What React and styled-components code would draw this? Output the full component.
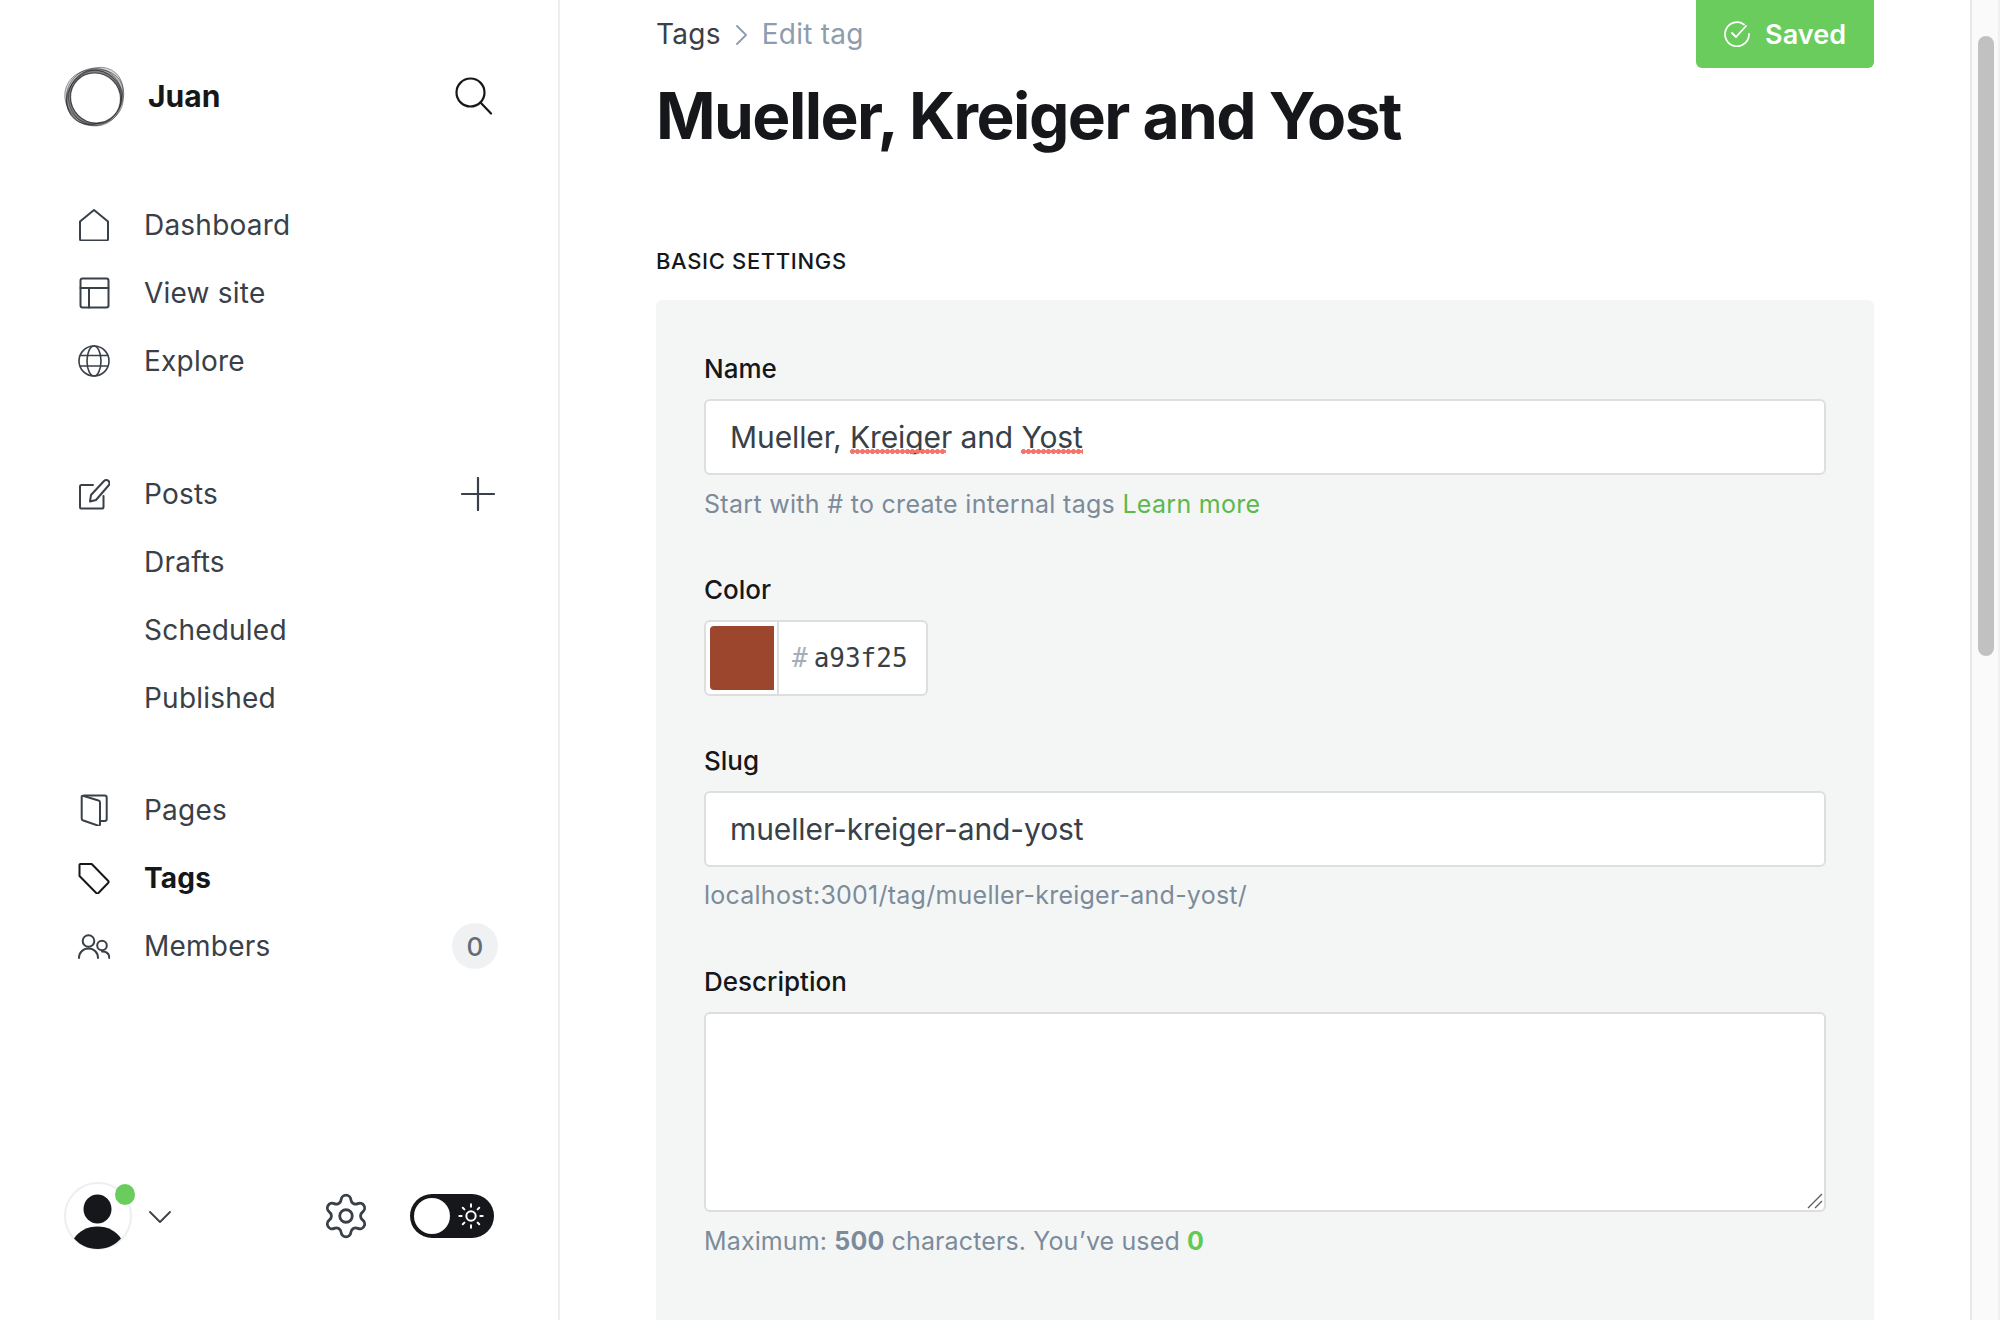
import React from 'react'
import styled, { createGlobalStyle } from 'styled-components'
import { Settings, Sun } from 'lucide-react'

const GlobalStyle = createGlobalStyle`
  html, body {
    margin: 0;
    height: 100%;
    overflow: hidden;
    background: #fff;
    font-family: Inter, "Noto Sans", sans-serif;
  }
  * { box-sizing: border-box; }
`

const Page = styled.div`
  display: flex;
  width: 2000px;
  height: 1320px;
  overflow: hidden;
`

const Sidebar = styled.aside`
  width: 560px;
  flex: none;
  display: flex;
  flex-direction: column;
  padding: 65px 60px 71px 64px;
  border-right: 2px solid #ebedef;
`

const Brand = styled.div`
  display: flex;
  align-items: center;
  height: 62px;
`

const BrandName = styled.span`
  margin-left: 22px;
  flex: 1;
  font-size: 30px;
  font-weight: 700;
  color: #15171a;
`

const SearchSlot = styled.span`
  display: flex;
  margin-right: 5px;
`

const Nav = styled.nav`
  padding-left: 14px;
  margin-top: ${p => p.$top}px;
`

const NavRow = styled.div`
  display: flex;
  align-items: center;
  height: 68px;
  font-size: 28px;
  letter-spacing: 0.22px;
  color: ${p => (p.$active ? '#15171a' : '#394047')};
  font-weight: ${p => (p.$active ? 700 : 400)};
`

const NavIcon = styled.span`
  display: flex;
  width: 32px;
  height: 32px;
  margin-right: 34px;
  color: ${p => (p.$active ? '#15171a' : '#394047')};
`

const SubRow = styled(NavRow)`
  padding-left: 66px;
`

const Label = styled.span`
  flex: 1;
`

const PlusSlot = styled.span`
  display: flex;
  margin-right: 3px;
`

const Count = styled.span`
  display: flex;
  align-items: center;
  justify-content: center;
  width: 46px;
  height: 46px;
  border-radius: 50%;
  background: #eff1f3;
  color: #626d79;
  font-size: 26px;
  font-weight: 500;
  letter-spacing: 0;
`

const Footer = styled.div`
  margin-top: auto;
  display: flex;
  align-items: center;
  height: 67px;
`

const Avatar = styled.div`
  position: relative;
  width: 68px;
  height: 68px;
`

const OnlineDot = styled.span`
  position: absolute;
  top: 2px;
  right: -3px;
  width: 20px;
  height: 21px;
  border-radius: 50%;
  background: #6acc5c;
`

const Chevron = styled.svg`
  margin-left: 17px;
  margin-top: 2px;
  color: #394047;
`

const GearSlot = styled.span`
  display: flex;
  margin-left: auto;
  margin-right: 39px;
  color: #394047;
`

const Toggle = styled.div`
  display: flex;
  align-items: center;
  justify-content: space-between;
  width: 84px;
  height: 44px;
  margin-right: 4px;
  padding: 0 9px 0 4px;
  border-radius: 22px;
  background: #15171a;
  color: #fff;
`

const Knob = styled.span`
  width: 36px;
  height: 36px;
  border-radius: 50%;
  background: #fff;
`

const Main = styled.main`
  flex: 1;
  min-width: 0;
  padding: 0 96px;
`

const Head = styled.header`
  display: flex;
  justify-content: space-between;
  align-items: flex-start;
`

const Crumbs = styled.div`
  display: flex;
  align-items: center;
  height: 68px;
  font-size: 28px;
  letter-spacing: 0.25px;
  color: #394047;
`

const CrumbSep = styled.svg`
  margin: 2px 15px 0 15px;
  color: #8e9cac;
`

const CrumbNow = styled.span`
  color: #8e9cac;
`

const SaveButton = styled.div`
  display: flex;
  align-items: center;
  width: 178px;
  height: 68px;
  padding-left: 28px;
  gap: 15px;
  border-radius: 0 0 6px 6px;
  background: #6acc5c;
  color: #fff;
  font-size: 27px;
  font-weight: 600;
  letter-spacing: 0.1px;
`

const Title = styled.h1`
  margin: 9px 0 0;
  font-size: 64px;
  line-height: 78px;
  font-weight: 700;
  letter-spacing: -1.55px;
  color: #15171a;
`

const SectionTitle = styled.h4`
  margin: 88px 0 0;
  height: 57px;
  line-height: 36px;
  font-size: 22px;
  font-weight: 500;
  letter-spacing: 0.65px;
  text-transform: uppercase;
  color: #15171a;
`

const Panel = styled.section`
  height: 1100px;
  padding: 51px 48px;
  border-radius: 6px 6px 0 0;
  background: #f4f6f6;
`

const Field = styled.div`
  margin-bottom: ${p => p.$gap}px;
`

const FieldLabel = styled.label`
  display: block;
  line-height: 36px;
  margin-bottom: 12px;
  font-size: 26px;
  font-weight: 500;
  color: #15171a;
`

const InputBox = styled.div`
  display: flex;
  align-items: center;
  height: 76px;
  padding: 0 24px;
  border: 2px solid #dddedf;
  border-radius: 6px;
  background: #fff;
  font-size: 30px;
  letter-spacing: -0.1px;
  color: #394047;
`

const Misspelled = styled.span`
  position: relative;
  &::after {
    content: '';
    position: absolute;
    left: 0;
    right: ${p => p.$cut || 0}px;
    bottom: 1px;
    height: 5px;
    background: radial-gradient(circle at 2.5px 2.5px, #f4756b 2.2px, transparent 2.7px) 0 0 / 5px 5px repeat-x;
  }
`

const Hint = styled.p`
  margin: ${p => p.$top}px 0 0;
  line-height: 36px;
  font-size: 25px;
  letter-spacing: ${p => p.$spacing}px;
  color: #7c8b9a;
`

const HintLink = styled.span`
  color: #5cb94c;
`

const HintCount = styled.strong`
  font-weight: 700;
  color: ${p => (p.$green ? '#62c954' : 'inherit')};
`

const ColorBox = styled.div`
  display: flex;
  width: 224px;
  height: 76px;
  border: 2px solid #dddedf;
  border-radius: 6px;
  background: #fff;
`

const SwatchCell = styled.div`
  width: 73px;
  flex: none;
  padding: 4px;
  border-right: 2px solid #dddedf;
`

const Swatch = styled.div`
  width: 64px;
  height: 64px;
  border-radius: 4px 0 0 4px;
  background: #9b462d;
`

const HexValue = styled.div`
  display: flex;
  align-items: center;
  padding-left: 13px;
  gap: 6px;
  font-family: "DejaVu Sans Mono", monospace;
  font-size: 26px;
  color: #394047;
`

const HexHash = styled.span`
  color: #a5aeb8;
`

const TextAreaWrap = styled.div`
  position: relative;
`

const TextArea = styled.textarea`
  display: block;
  width: 100%;
  height: 200px;
  padding: 12px 24px;
  border: 2px solid #dddedf;
  border-radius: 6px;
  background: #fff;
  resize: none;
  outline: none;
`

const ResizeGrip = styled.svg`
  position: absolute;
  right: 3px;
  bottom: 3px;
`

const ScrollTrack = styled.div`
  position: relative;
  width: 30px;
  flex: none;
  border-left: 2px solid #e8e8e8;
  border-right: 2px solid #f0f0f0;
  background: #fafafa;
`

const ScrollThumb = styled.div`
  position: absolute;
  top: 36px;
  left: 6px;
  width: 16px;
  height: 620px;
  border-radius: 8px;
  background: #c1c1c1;
`

const Line = ({ children, ...rest }) => (
  <svg width="32" height="32" viewBox="0 0 32 32" fill="none" stroke="currentColor" strokeWidth="2" strokeLinejoin="round" strokeLinecap="round" {...rest}>
    {children}
  </svg>
)

const HomeIcon = () => <Line><path d="M2 12.500 16 1l14 11.500V30a1.500 1.500 0 0 1-1.500 1.500h-25A1.500 1.500 0 0 1 2 30z" /></Line>
const LayoutIcon = () => (
  <Line>
    <rect x="2.500" y="1.500" width="28" height="29" rx="2" />
    <path d="M2.500 11h28M11 11v19.500" />
  </Line>
)
const GlobeIcon = () => (
  <Line strokeWidth="1.6">
    <circle cx="16" cy="16" r="15" />
    <ellipse cx="16" cy="16" rx="7" ry="15" />
    <path d="M2.500 10.500h27M2.500 21h27" />
  </Line>
)
const PostsIcon = () => (
  <Line>
    <path d="M15 7H3.500a1.500 1.500 0 0 0-1.500 1.500V29a1.500 1.500 0 0 0 1.500 1.500H24a1.500 1.500 0 0 0 1.500-1.500V18" />
    <path d="M12 23.500l1-6.500L26 3a3 3 0 0 1 4.500 4.500L18 22z" />
  </Line>
)
const PagesIcon = () => (
  <Line>
    <path d="M6 1.500h20.700a2 2 0 0 1 2 2V25a2 2 0 0 1-2 2H22.500" />
    <path d="M5 1.800l15.500 4.700A2 2 0 0 1 22 8.500v22a1.300 1.300 0 0 1-1.700 1.200L5.300 26.500a2.200 2.200 0 0 1-1.600-2.100V3a1 1 0 0 1 1.300-1.200z" />
  </Line>
)
const TagIcon = () => (
  <Line>
    <path d="M2.500 2H13.700L30.300 19a1.200 1.200 0 0 1 0 1.700L20.200 31.200a1.200 1.200 0 0 1-1.700 0L1.500 14V3a1 1 0 0 1 1-1z" />
  </Line>
)
const MembersIcon = () => (
  <Line>
    <circle cx="10.500" cy="11" r="5.800" />
    <path d="M1 28c0-5.500 4-9.500 9.500-9.500S20 22.500 20 28" />
    <circle cx="24" cy="15.500" r="4.800" />
    <path d="M24 21.500c4.500 0 7.300 2.500 7.300 6.500" />
  </Line>
)

const Logo = () => (
  <svg width="62" height="62" viewBox="0 0 62 62" fill="#15171a" fillOpacity="0.14" stroke="#15171a" strokeWidth="0.8" strokeOpacity="0.5">
    <ellipse cx="31" cy="31" rx="31" ry="25.500" transform="rotate(-48 31 31)" />
    <ellipse cx="31" cy="32" rx="30" ry="26" transform="rotate(-35 31 32)" />
    <ellipse cx="30" cy="32" rx="29.500" ry="27" transform="rotate(20 30 32)" />
    <ellipse cx="30" cy="32" rx="29" ry="27.500" transform="rotate(-70 30 32)" />
    <ellipse cx="31" cy="33" rx="28" ry="26.500" transform="rotate(75 31 33)" />
    <ellipse cx="31.500" cy="33" rx="25.500" ry="24.500" transform="rotate(45 31.500 33)" fill="#fff" fillOpacity="1" strokeWidth="1.200" strokeOpacity="0.7" />
  </svg>
)

const SearchIcon = () => (
  <svg width="38" height="38" viewBox="0 0 38 38" fill="none" stroke="#15171a" strokeWidth="2.200" strokeLinecap="round">
    <circle cx="15.500" cy="15.500" r="14" />
    <path d="M25.500 25.500 36 36.500" />
  </svg>
)

const PlusIcon = () => (
  <svg width="34" height="34" viewBox="0 0 34 34" fill="none" stroke="#394047" strokeWidth="2.200" strokeLinecap="round">
    <path d="M17 1v32M1 17h32" />
  </svg>
)

const CheckIcon = () => (
  <svg width="26" height="26" viewBox="0 0 26 26" fill="none" stroke="#fff" strokeWidth="1.800" strokeLinecap="round" strokeLinejoin="round">
    <path d="M20 3.500A12 12 0 1 0 25 13" />
    <path d="M8 12l4 4 10-11" />
  </svg>
)

const AvatarArt = () => (
  <svg width="68" height="68" viewBox="0 0 68 68">
    <circle cx="34" cy="34" r="33" fill="#fff" stroke="#eceff2" strokeWidth="2" />
    <ellipse cx="33.500" cy="27" rx="14" ry="14.500" fill="#15171a" />
    <path d="M10 56.500C15 49 23 44.500 33.500 44.500S52 49 57 56.500C51 63 43 67 33.500 67S16 63 10 56.500z" fill="#15171a" />
  </svg>
)

const topNav = [
  { label: 'Dashboard', icon: <HomeIcon /> },
  { label: 'View site', icon: <LayoutIcon /> },
  { label: 'Explore', icon: <GlobeIcon /> },
]

export default function App() {
  return (
    <>
      <GlobalStyle />
      <Page>
        <Sidebar>
          <Brand>
            <Logo />
            <BrandName>Juan</BrandName>
            <SearchSlot><SearchIcon /></SearchSlot>
          </Brand>

          <Nav $top={64}>
            {topNav.map(item => (
              <NavRow key={item.label}>
                <NavIcon>{item.icon}</NavIcon>
                {item.label}
              </NavRow>
            ))}
          </Nav>

          <Nav $top={65}>
            <NavRow>
              <NavIcon><PostsIcon /></NavIcon>
              <Label>Posts</Label>
              <PlusSlot><PlusIcon /></PlusSlot>
            </NavRow>
            <SubRow>Drafts</SubRow>
            <SubRow>Scheduled</SubRow>
            <SubRow>Published</SubRow>
          </Nav>

          <Nav $top={44}>
            <NavRow>
              <NavIcon><PagesIcon /></NavIcon>
              Pages
            </NavRow>
            <NavRow $active>
              <NavIcon $active><TagIcon /></NavIcon>
              Tags
            </NavRow>
            <NavRow>
              <NavIcon><MembersIcon /></NavIcon>
              <Label>Members</Label>
              <Count>0</Count>
            </NavRow>
          </Nav>

          <Footer>
            <Avatar>
              <AvatarArt />
              <OnlineDot />
            </Avatar>
            <Chevron width="22" height="12" viewBox="0 0 22 12" fill="none" stroke="currentColor" strokeWidth="1.800" strokeLinecap="round" strokeLinejoin="round">
              <path d="M1 1l10 10L21 1" />
            </Chevron>
            <GearSlot><Settings size={50} strokeWidth={1.35} /></GearSlot>
            <Toggle>
              <Knob />
              <Sun size={28} strokeWidth={1.7} />
            </Toggle>
          </Footer>
        </Sidebar>

        <Main>
          <Head>
            <Crumbs>
              Tags
              <CrumbSep width="11" height="20" viewBox="0 0 11 20" fill="none" stroke="currentColor" strokeWidth="1.800" strokeLinecap="round" strokeLinejoin="round">
                <path d="M1 1l9 9-9 9" />
              </CrumbSep>
              <CrumbNow>Edit tag</CrumbNow>
            </Crumbs>
            <SaveButton>
              <CheckIcon />
              Saved
            </SaveButton>
          </Head>
          <Title>Mueller, Kreiger and Yost</Title>
          <SectionTitle>Basic settings</SectionTitle>

          <Panel>
            <Field $gap={50}>
              <FieldLabel>Name</FieldLabel>
              <InputBox>
                <span>Mueller, <Misspelled $cut={6}>Kreiger</Misspelled> and <Misspelled>Yost</Misspelled></span>
              </InputBox>
              <Hint $top={11} $spacing={0.3}>Start with # to create internal tags <HintLink>Learn more</HintLink></Hint>
            </Field>

            <Field $gap={47}>
              <FieldLabel>Color</FieldLabel>
              <ColorBox>
                <SwatchCell><Swatch /></SwatchCell>
                <HexValue><HexHash>#</HexHash>a93f25</HexValue>
              </ColorBox>
            </Field>

            <Field $gap={51}>
              <FieldLabel>Slug</FieldLabel>
              <InputBox>mueller-kreiger-and-yost</InputBox>
              <Hint $top={10} $spacing={0.24}>localhost:3001/tag/mueller-kreiger-and-yost/</Hint>
            </Field>

            <Field $gap={48}>
              <FieldLabel>Description</FieldLabel>
              <TextAreaWrap>
                <TextArea />
                <ResizeGrip width="16" height="16" viewBox="0 0 16 16" fill="none" stroke="#5f5f5f" strokeWidth="1.400">
                  <path d="M1 15 15 1M8 15l7-7" />
                </ResizeGrip>
              </TextAreaWrap>
              <Hint $top={11} $spacing={0.13}>
                Maximum: <HintCount>500</HintCount> characters. You’ve used <HintCount $green>0</HintCount>
              </Hint>
            </Field>
          </Panel>
        </Main>

        <ScrollTrack>
          <ScrollThumb />
        </ScrollTrack>
      </Page>
    </>
  )
}
